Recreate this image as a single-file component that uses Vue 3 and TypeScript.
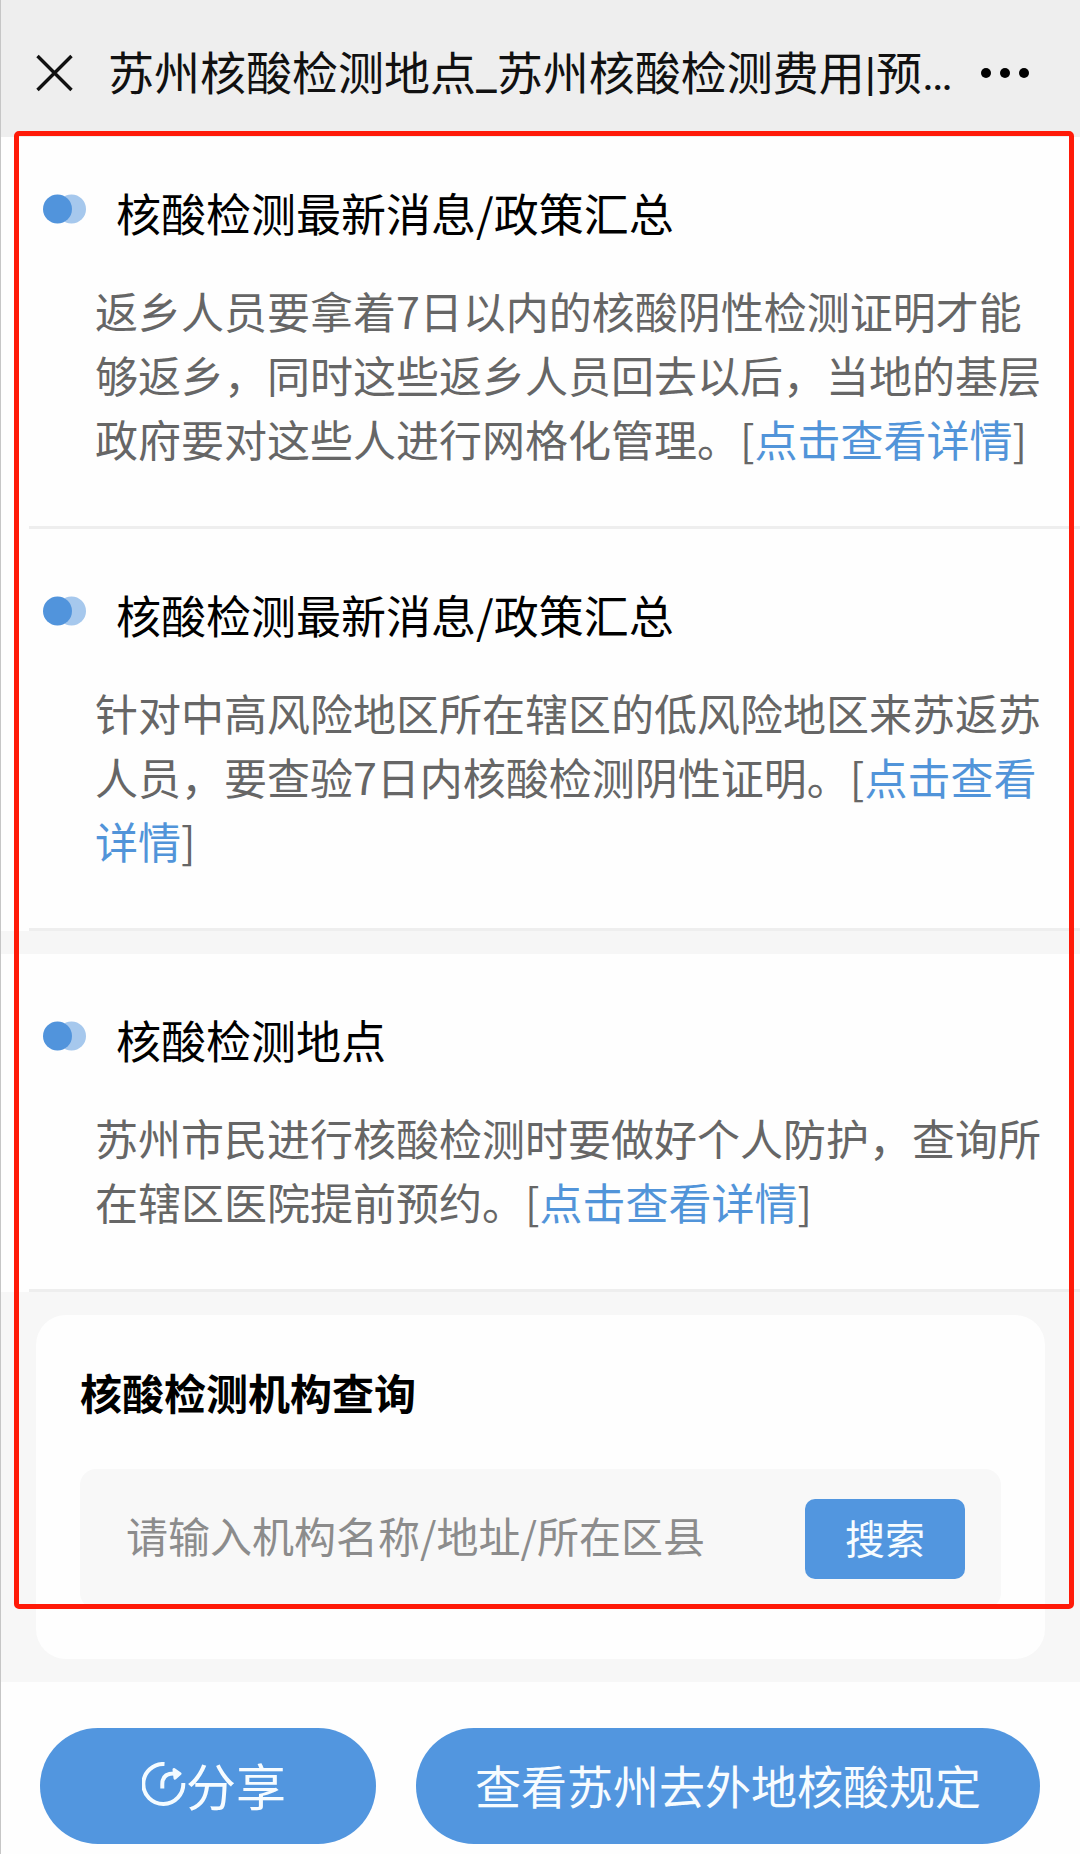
<script setup lang="ts">
import { ref } from 'vue'

interface Notice {
  title: string
  text: string
}

const news: Notice[] = [
  {
    title: '核酸检测最新消息/政策汇总',
    text: '返乡人员要拿着7日以内的核酸阴性检测证明才能够返乡，同时这些返乡人员回去以后，当地的基层政府要对这些人进行网格化管理。',
  },
  {
    title: '核酸检测最新消息/政策汇总',
    text: '针对中高风险地区所在辖区的低风险地区来苏返苏人员，要查验7日内核酸检测阴性证明。',
  },
]

const places: Notice[] = [
  {
    title: '核酸检测地点',
    text: '苏州市民进行核酸检测时要做好个人防护，查询所在辖区医院提前预约。',
  },
]

const groups: Notice[][] = [news, places]
const keyword = ref('')
</script>

<template>
  <div class="page">
    <header class="topbar">
      <button class="icon-button" type="button" aria-label="关闭">
        <svg width="37" height="38" viewBox="0 0 37 38" fill="none" stroke="#111" stroke-width="3.4">
          <path d="M1.5 2 35.5 36M35.5 2 1.5 36" />
        </svg>
      </button>
      <h1 class="topbar-title">苏州核酸检测地点_苏州核酸检测费用|预…</h1>
      <button class="icon-button" type="button" aria-label="更多">
        <svg width="48" height="10" viewBox="0 0 48 10" fill="#000">
          <circle cx="5" cy="5" r="5" />
          <circle cx="24" cy="5" r="5" />
          <circle cx="43" cy="5" r="5" />
        </svg>
      </button>
    </header>

    <main class="content">
      <section v-for="(group, g) in groups" :key="g" class="group">
        <article v-for="(item, i) in group" :key="i" class="notice">
          <div class="notice-head">
            <svg class="bullet" width="43" height="30" viewBox="0 0 43 30">
              <circle cx="28.5" cy="15" r="14.5" fill="#a6c8ed" />
              <circle cx="14.5" cy="15" r="14.5" fill="#5194dc" />
            </svg>
            <h2 class="notice-title">{{ item.title }}</h2>
          </div>
          <p class="notice-text">{{ item.text }}[<a href="#">点击查看详情</a>]</p>
        </article>
      </section>

      <section class="lookup">
        <form class="card" @submit.prevent>
          <label class="card-title" for="keyword">核酸检测机构查询</label>
          <div class="search">
            <input
              id="keyword"
              v-model="keyword"
              class="search-input"
              type="text"
              placeholder="请输入机构名称/地址/所在区县"
            />
            <button class="search-button" type="submit">搜索</button>
          </div>
        </form>
      </section>

      <div class="highlight" aria-hidden="true"></div>
    </main>

    <footer class="actions">
      <button class="pill pill-share" type="button">
        <svg class="share-icon" width="44" height="44" viewBox="0 0 44 44" fill="none" stroke="#f4fbff" stroke-width="4">
          <path d="M22.5 2A20 20 0 1 0 41.3 21" />
          <path d="M20.3 26.5V22C20.3 15 24 11.6 32 11.6" />
          <path d="M32 7.5 38 11.7 33 16.2Z" fill="#f4fbff" stroke-width="3" stroke-linejoin="round" />
        </svg>
        <span>分享</span>
      </button>
      <button class="pill pill-rules" type="button">查看苏州去外地核酸规定</button>
    </footer>
  </div>
</template>

<style>
body {
  margin: 0;
  background: #fefefe;
}
</style>

<style scoped>
.page {
  min-height: 100vh;
  box-sizing: border-box;
  border-left: 1px solid #c6c6c6;
  background: #fefefe;
  color: #000;
  font-family: "Noto Sans CJK SC", sans-serif;
}

button,
input {
  margin: 0;
  padding: 0;
  border: 0;
  background: none;
  font-family: inherit;
}

svg {
  display: block;
  flex: none;
}

.topbar {
  display: flex;
  align-items: center;
  height: 137px;
  box-sizing: border-box;
  padding: 8px 51px 0 35px;
  background: #eee;
}

.icon-button {
  flex: none;
}

.topbar-title {
  flex: 1;
  min-width: 0;
  margin: 0 15px 0 35px;
  padding-top: 3px;
  overflow: hidden;
  text-overflow: ellipsis;
  white-space: nowrap;
  color: #111;
  font-family: Roboto, "Noto Sans CJK SC", sans-serif;
  font-size: 46px;
  font-weight: 400;
  line-height: 68px;
}

.content {
  position: relative;
}

.group + .group {
  border-top: 23px solid #f6f6f6;
}

.notice {
  margin-left: 28px;
  padding: 54px 30px 56px 14px;
  border-bottom: 3px solid #eee;
}

.group:first-child .notice:first-child {
  padding-top: 44px;
}

.notice-head {
  display: flex;
  gap: 30px;
}

.bullet {
  margin-top: 13px;
}

.notice-title {
  margin: 0;
  font-size: 45px;
  font-weight: 400;
  line-height: 64px;
}

.notice-text {
  margin: 33px 0 0 52px;
  color: #666;
  font-size: 43px;
  line-height: 64px;
}

.notice-text a {
  color: #5194d9;
  text-decoration: none;
}

.lookup {
  padding: 23px 35px;
  background: #f7f7f7;
}

.card {
  padding: 45px 44px 50px;
  border-radius: 30px;
  background: #fefefe;
}

.card-title {
  display: block;
  font-size: 42px;
  font-weight: 700;
  line-height: 64px;
}

.search {
  display: flex;
  align-items: center;
  height: 140px;
  margin-top: 45px;
  box-sizing: border-box;
  padding: 0 36px 0 46px;
  border-radius: 16px;
  background: #f8f8f8;
}

.search-input {
  flex: 1;
  min-width: 0;
  height: 64px;
  padding-bottom: 10px;
  outline: none;
  color: #333;
  font-size: 42px;
}

.search-input::placeholder {
  color: #8c8c8c;
  opacity: 1;
}

.search-button {
  width: 160px;
  height: 80px;
  padding-bottom: 4px;
  border-radius: 10px;
  background: #5296df;
  color: #f7fcff;
  font-size: 40px;
}

.highlight {
  position: absolute;
  top: -6px;
  right: 6px;
  bottom: 73px;
  left: 13px;
  border: 5px solid #ff1a08;
  border-radius: 5px;
  pointer-events: none;
}

.actions {
  display: flex;
  gap: 40px;
  padding: 46px 40px 11px 39px;
}

.pill {
  display: flex;
  align-items: center;
  justify-content: center;
  height: 116px;
  min-width: 0;
  padding-bottom: 4px;
  border-radius: 58px;
  background: #5296df;
  color: #f7fcff;
  white-space: nowrap;
}

.pill-share {
  flex: 336;
  font-size: 50px;
}

.share-icon {
  margin-left: 12px;
}

.pill-rules {
  flex: 624;
  font-size: 46px;
}
</style>
